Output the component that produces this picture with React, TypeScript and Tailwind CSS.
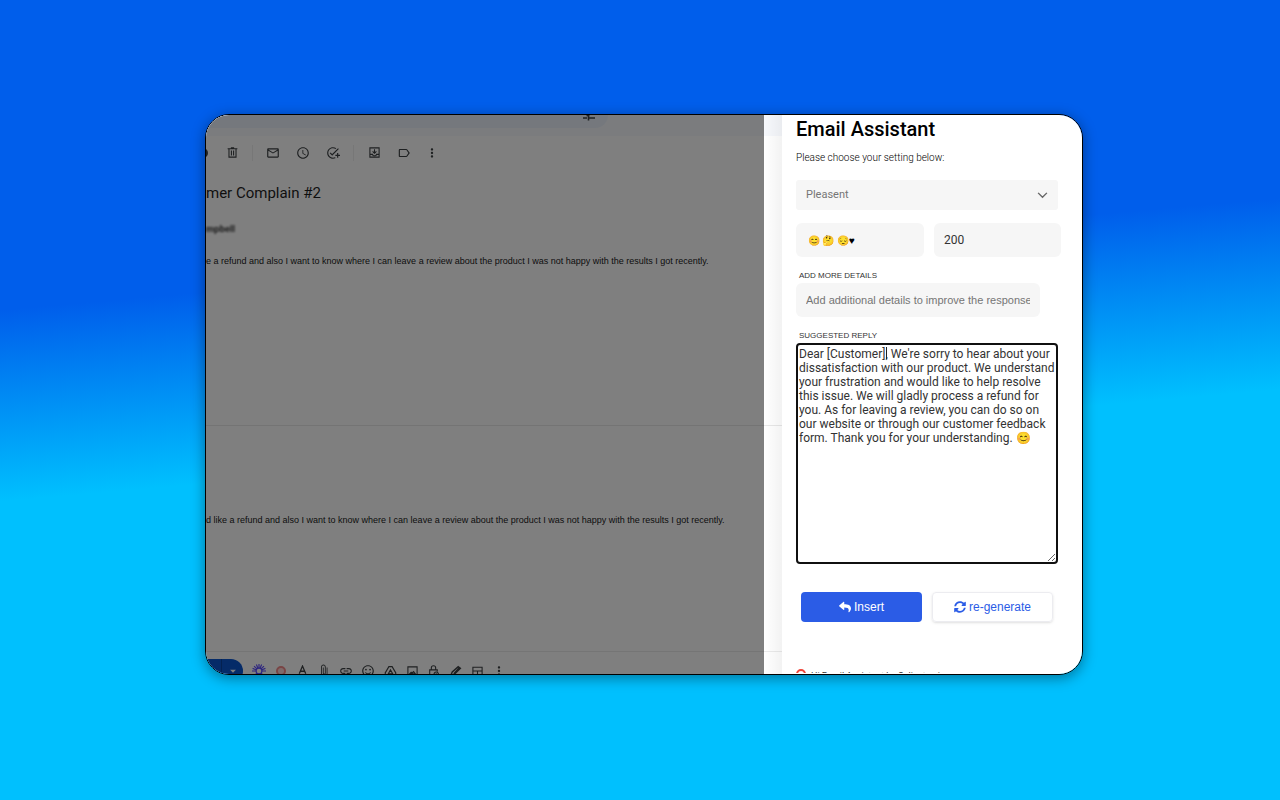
import { useState } from "react";
import type { ReactNode } from "react";
import { FaReply, FaSyncAlt } from "react-icons/fa";
import {
  MdArrowDropDown,
  MdAttachFile,
  MdInsertLink,
  MdMailOutline,
  MdMoreVert,
  MdOutlineAddTask,
  MdOutlineLabel,
  MdOutlineSentimentSatisfiedAlt,
  MdSchedule,
} from "react-icons/md";

const REPLY =
  "Dear [Customer], We're sorry to hear about your dissatisfaction with our product. We understand your frustration and would like to help resolve this issue. We will gladly process a refund for you. As for leaving a review, you can do so on our website or through our customer feedback form. Thank you for your understanding. 😊";

function IconButton({ label, className = "", children }: { label: string; className?: string; children: ReactNode }) {
  return (
    <button type="button" aria-label={label} className={`flex shrink-0 items-center justify-center ${className}`}>
      {children}
    </button>
  );
}

function LineIcon({ d, width = 2 }: { d: string; width?: number }) {
  return (
    <svg viewBox="0 0 24 24" className="size-[13px]" fill="none" stroke="currentColor" strokeWidth={width}>
      <path d={d} />
    </svg>
  );
}

function Toolbar() {
  return (
    <div className="flex h-[33px] items-center text-[#3c4043]">
      <IconButton label="Report" className="-ml-[9px] w-3">
        <span className="size-[10px] rounded-full border-2 border-[#3c4043]" />
      </IconButton>
      <IconButton label="Delete" className="ml-2 w-[30px]">
        <LineIcon d="M3 5h18M9 3.500h6M5.500 5v15.500h13V5M10 8.500v9M14 8.500v9" />
      </IconButton>
      <span className="mx-[5px] h-4 w-px bg-[#eeeeee]" />
      <IconButton label="Mark as unread" className="w-[30px]"><MdMailOutline size={14} /></IconButton>
      <IconButton label="Snooze" className="w-[30px]"><MdSchedule size={14} /></IconButton>
      <IconButton label="Add to tasks" className="w-[30px]"><MdOutlineAddTask size={14} /></IconButton>
      <span className="mx-[5px] h-4 w-px bg-[#eeeeee]" />
      <IconButton label="Move to" className="w-[30px]">
        <LineIcon d="M3.500 3.500h17v17h-17zM3.500 15.500h5c0 3.500 7 3.500 7 0h5M12 6v7M8.500 10l3.500 3.500 3.500-3.500" />
      </IconButton>
      <IconButton label="Labels" className="w-[30px]"><MdOutlineLabel size={14} /></IconButton>
      <IconButton label="More" className="w-[26px]"><MdMoreVert size={14} /></IconButton>
    </div>
  );
}

function ComposeBar() {
  return (
    <div className="flex h-6 items-center text-[#3c4043]">
      <div className="flex h-6 w-[37px] shrink-0 rounded-r-full bg-[#0b57d0] text-white">
        <button type="button" aria-label="Send" className="w-4 border-r border-[#0842a0]" />
        <IconButton label="Send options" className="flex-1"><MdArrowDropDown size={14} /></IconButton>
      </div>
      <div className="ml-1 flex">
        <IconButton label="Assistant" className="w-6 text-[#5b4bff]">
          <svg viewBox="0 0 24 24" className="size-[14px]" fill="none" stroke="currentColor" strokeWidth="2">
            <circle cx="12" cy="12" r="5" />
            <path d="M12 7V0M12 24v-7M7 12H0M24 12h-7M8.500 8.500l-5-5M20.500 20.500l-5-5M8.500 15.500l-5 5M20.500 3.500l-5 5M10 7 7.500 1M14 7l2.500-6M7 10 1 7.500M17 10l6-2.500" />
          </svg>
        </IconButton>
        <IconButton label="Recorder" className="w-5">
          <span className="size-[10px] rounded-full border-2 border-[#f28b8b] bg-[#ffd5d5]" />
        </IconButton>
        <IconButton label="Formatting" className="w-[22px]"><LineIcon d="M6 16 12 2l6 14M8 11.500h8" width={2.4} /></IconButton>
        <IconButton label="Attach" className="w-[22px]"><MdAttachFile size={14} /></IconButton>
        <IconButton label="Link" className="w-[22px]"><MdInsertLink size={14} /></IconButton>
        <IconButton label="Emoji" className="w-[22px]"><MdOutlineSentimentSatisfiedAlt size={14} /></IconButton>
        <IconButton label="Drive" className="w-[22px]"><LineIcon d="M9 3h6l7 12-3 6H5l-3-6zM12 9l-4 7h8z" /></IconButton>
        <IconButton label="Photo" className="w-[22px]"><LineIcon d="M3.500 3.500h17v17h-17zM7 16h10l-3-4-3 3-1.500-1.500z" /></IconButton>
        <IconButton label="Confidential" className="w-[21px]"><LineIcon d="M11 20H5V9h14v3M8 9V5c0-5 8-5 8 0v4M17 13a4 4 0 1 0 .1 0M17 15v3" /></IconButton>
        <IconButton label="Signature" className="w-[22px]"><LineIcon d="m3 20 3-7L17 3l4 3-11 11zM9 16 19 5M12 21h9" width={2.6} /></IconButton>
        <IconButton label="Layout" className="w-[22px]"><LineIcon d="M3.500 4h17v16h-17zM3 11h18M12 11v9" /></IconButton>
        <IconButton label="More options" className="w-[22px]"><MdMoreVert size={14} /></IconButton>
      </div>
    </div>
  );
}

function MailPane() {
  return (
    <main className="relative flex min-w-0 flex-1 flex-col overflow-hidden whitespace-nowrap bg-white">
      <div className="h-[21px] shrink-0 bg-[#f6f8fc]">
        <div className="flex h-[13px] w-[402px] justify-end rounded-br-2xl bg-[#eaf1fb] pr-3">
          <svg viewBox="0 0 14 8" className="h-2 w-[14px]" stroke="#3c4043" strokeWidth="1.600">
            <path d="M1 3h4M7 3h6M6.500 0.500v5M4.500 0.500h3" />
          </svg>
        </div>
      </div>
      <Toolbar />
      <h1 className="mt-3 font-[Roboto,sans-serif] text-[15px] leading-6 text-[#1f1f1f]">mer Complain #2</h1>
      <p className="mt-4 font-['Liberation_Sans',sans-serif] text-[9px] font-bold leading-4 text-[#1f1f1f] blur-[1px]">mpbell</p>
      <p className="mt-4 font-['Liberation_Sans',sans-serif] text-[9px] leading-4 text-[#222]">
        e a refund and also I want to know where I can leave a review about the product I was not happy with the results I got recently.
      </p>
      <hr className="mt-[156px] border-[#e8e8e8]" />
      <p className="mt-[86px] font-['Liberation_Sans',sans-serif] text-[9px] leading-4 text-[#222]">
        d like a refund and also I want to know where I can leave a review about the product I was not happy with the results I got recently.
      </p>
      <hr className="mb-[7px] mt-[123px] border-[#ebebeb]" />
      <div className="h-[15px] overflow-hidden">
        <ComposeBar />
      </div>
      <div className="pointer-events-none absolute inset-y-0 left-0 right-[18px] bg-black/50" />
      <div className="pointer-events-none absolute inset-y-0 right-0 w-[18px] bg-linear-to-r from-transparent to-black/5" />
    </main>
  );
}

function AssistantPanel() {
  const [tone, setTone] = useState("Pleasent");
  const [emojis, setEmojis] = useState("😊 🤔 😔♥");
  const [words, setWords] = useState("200");
  const [reply, setReply] = useState(REPLY);
  return (
    <aside className="w-[300px] shrink-0 bg-white pl-[14px] font-[Roboto,sans-serif] text-[#333]">
      <h2 className="pt-[2px] text-[20px] font-medium leading-6 text-black">Email Assistant</h2>
      <p className="mt-[9px] text-[10px] font-light leading-4 text-black">Please choose your setting below:</p>
      <div className="relative mt-[14px] w-[262px]">
        <select
          aria-label="Tone"
          value={tone}
          onChange={(e) => setTone(e.target.value)}
          className="block h-[30px] w-full appearance-none rounded-[3px] bg-[#f6f6f6] px-[10px] text-[11px] text-[#757575]"
        >
          <option>Pleasent</option>
        </select>
        <svg viewBox="0 0 12 8" className="pointer-events-none absolute right-[10px] top-3 h-[7px] w-[11px]" fill="none" stroke="#666" strokeWidth="1.600">
          <path d="m1 1 5 5 5-5" />
        </svg>
      </div>
      <div className="mt-[13px] flex gap-[10px]">
        <input aria-label="Emojis" value={emojis} onChange={(e) => setEmojis(e.target.value)} className="h-[34px] w-[128px] rounded-md bg-[#f6f6f6] px-3 text-[10px] text-black" />
        <input aria-label="Words" value={words} onChange={(e) => setWords(e.target.value)} className="h-[34px] w-[127px] rounded-md bg-[#f6f6f6] px-[10px] text-[12px]" />
      </div>
      <label htmlFor="details" className="mt-3 block pl-[3px] font-['Liberation_Sans',sans-serif] text-[8px] leading-[14px]">ADD MORE DETAILS</label>
      <input
        id="details"
        placeholder="Add additional details to improve the response"
        className="block h-[34px] w-[244px] rounded-md bg-[#f6f6f6] px-[10px] font-['Liberation_Sans',sans-serif] text-[11px] placeholder:text-[#757575]"
      />
      <label htmlFor="reply" className="mt-3 block pl-[3px] font-['Liberation_Sans',sans-serif] text-[8px] leading-[14px]">SUGGESTED REPLY</label>
      <div className="relative w-[262px]">
        <textarea
          id="reply"
          value={reply}
          onChange={(e) => setReply(e.target.value)}
          className="block h-[221px] w-full rounded-[4px] border-2 border-[#101010] px-px py-[2px] text-[12px] leading-[14px] text-[#333]"
        />
        <span className="pointer-events-none absolute left-[90px] top-1 h-3 w-px bg-[#222]" />
      </div>
      <div className="mt-7 flex gap-[10px] pl-[5px] font-['Liberation_Sans',sans-serif] text-[12px]">
        <button type="button" className="flex h-[30px] w-[121px] items-center justify-center gap-[3px] rounded-[4px] bg-[#2b5ce6] text-white">
          <FaReply size={12} />
          Insert
        </button>
        <button type="button" className="flex h-[30px] w-[121px] items-center justify-center gap-[3px] rounded-[4px] border border-[#ececf0] text-[#2b5ce6] shadow-sm">
          <FaSyncAlt size={12} />
          re-generate
        </button>
      </div>
      <div className="mt-[47px] flex h-1 items-start gap-[5px] overflow-hidden text-[9px] leading-[14px]">
        <span className="size-[10px] shrink-0 rounded-full border-2 border-[#f04438]" />
        <span>Hi Email Assistant by Caliente.ai</span>
      </div>
    </aside>
  );
}

export default function App() {
  return (
    <div className="flex min-h-screen items-start justify-center bg-[linear-gradient(175deg,#005eeb_34%,#00c0fe_55%)] pb-10 pl-2 pt-[114px]">
      <div className="flex w-full max-w-[878px] overflow-hidden rounded-3xl border border-black shadow-[0_3px_14px_rgba(0,0,0,0.4)]">
        <MailPane />
        <AssistantPanel />
      </div>
    </div>
  );
}
